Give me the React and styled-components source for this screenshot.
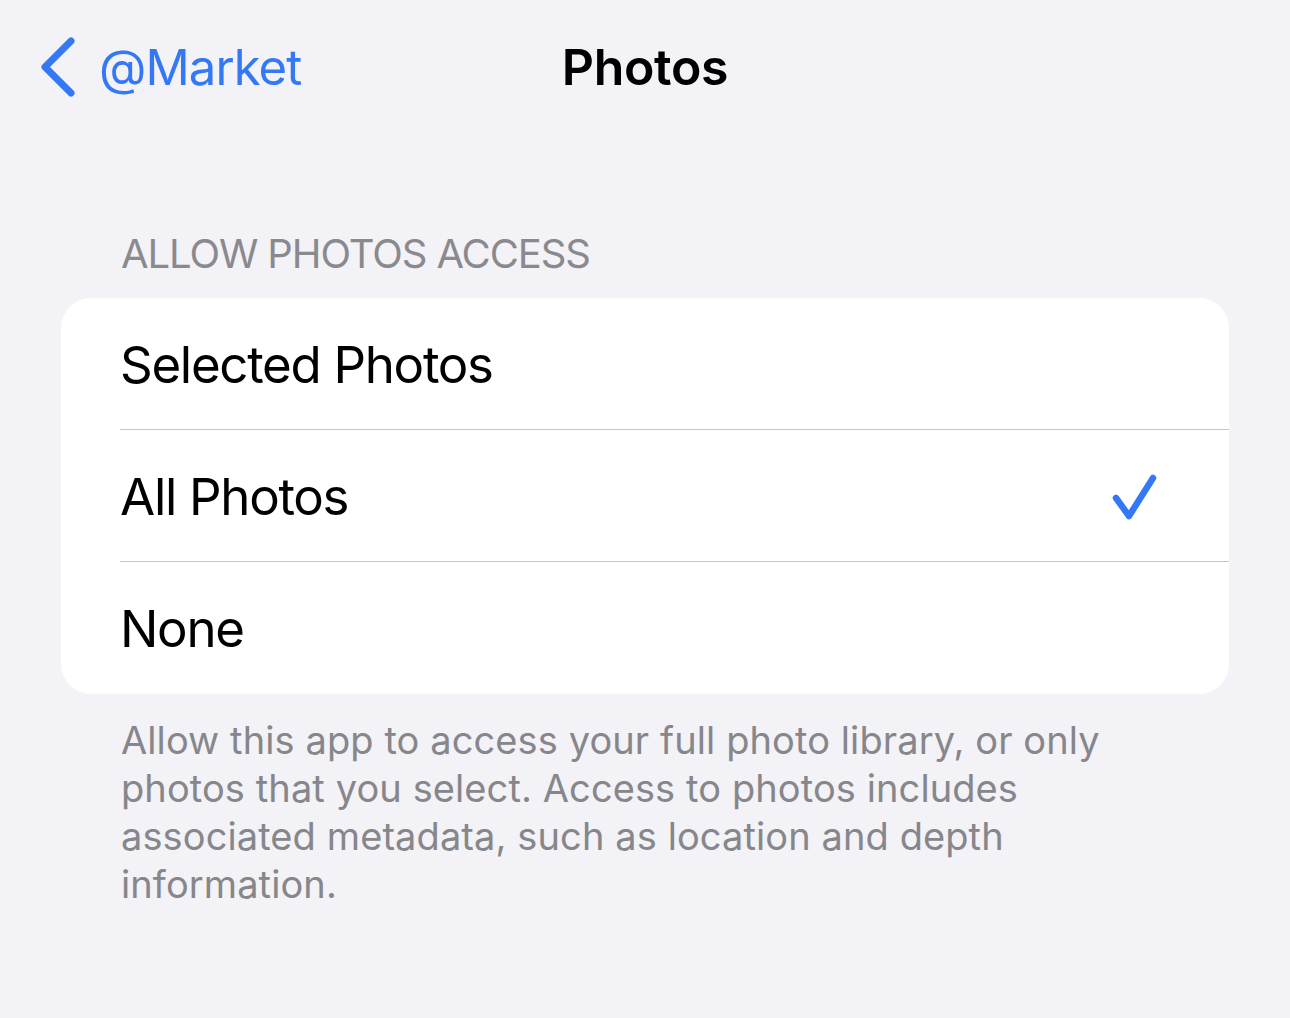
import React from 'react'
import styled, { createGlobalStyle } from 'styled-components'

const GlobalStyle = createGlobalStyle`
  body {
    margin: 0;
    background: #f2f2f7;
    font-family: Inter, "Noto Sans", sans-serif;
    -webkit-font-smoothing: antialiased;
  }
`

const Page = styled.div`
  width: 1290px;
  min-height: 1018px;
  background: #f2f2f7;
`

const NavBar = styled.div`
  height: 134px;
  display: grid;
  grid-template-columns: 1fr auto 1fr;
  align-items: center;
  padding: 0 0 0 40px;
`

const Back = styled.div`
  display: flex;
  align-items: center;
  gap: 23px;
  color: #3478f6;
  font-size: 49px;
  letter-spacing: -0.9px;
`

const Title = styled.div`
  font-size: 50px;
  font-weight: 600;
  color: #000;
  letter-spacing: -0.3px;
  transform: translateX(-20px);
`

const SectionHeader = styled.div`
  margin-top: 96px;
  padding-left: 121px;
  font-size: 40px;
  line-height: 48px;
  color: #8a8a8e;
  letter-spacing: -1.1px;
`

const Card = styled.div`
  margin: 20px 61px 0;
  background: #fff;
  border-radius: 30px;
  overflow: hidden;
`

const Row = styled.div`
  height: 132px;
  display: flex;
  align-items: center;
  justify-content: space-between;
  padding: 0 69px 0 59px;
  position: relative;
  font-size: 51px;
  color: #000;
  letter-spacing: -1.3px;
  ${p => p.$divider && `
    &::after {
      content: '';
      position: absolute;
      left: 59px;
      right: 0;
      bottom: 0;
      height: 1px;
      background: #c6c6c8;
    }
  `}
`

const Footer = styled.div`
  margin-top: 22px;
  padding: 0 150px 0 121px;
  font-size: 38px;
  line-height: 48px;
  color: #86868b;
  letter-spacing: 0.1px;
`

const Chevron = () => (
  <svg width="36" height="60" viewBox="0 0 36 60" fill="none">
    <path d="M31 4 L5 30 L31 56" stroke="#3478f6" strokeWidth="7" strokeLinecap="round" strokeLinejoin="round" />
  </svg>
)

const Check = () => (
  <svg width="50" height="50" viewBox="0 0 50 50" fill="none">
    <path d="M6 27 L19 45 L43 7" stroke="#3478f6" strokeWidth="6.5" strokeLinecap="round" strokeLinejoin="round" />
  </svg>
)

const options = [
  { label: 'Selected Photos' },
  { label: 'All Photos', checked: true },
  { label: 'None' },
]

export default function App() {
  return (
    <Page>
      <GlobalStyle />
      <NavBar>
        <Back>
          <Chevron />
          <span>@Market</span>
        </Back>
        <Title>Photos</Title>
        <div />
      </NavBar>
      <SectionHeader>ALLOW PHOTOS ACCESS</SectionHeader>
      <Card>
        {options.map((o, i) => (
          <Row key={o.label} $divider={i < options.length - 1}>
            <span>{o.label}</span>
            {o.checked && <Check />}
          </Row>
        ))}
      </Card>
      <Footer>
        Allow this app to access your full photo library, or only photos that you select. Access to photos includes associated metadata, such as location and depth information.
      </Footer>
    </Page>
  )
}
